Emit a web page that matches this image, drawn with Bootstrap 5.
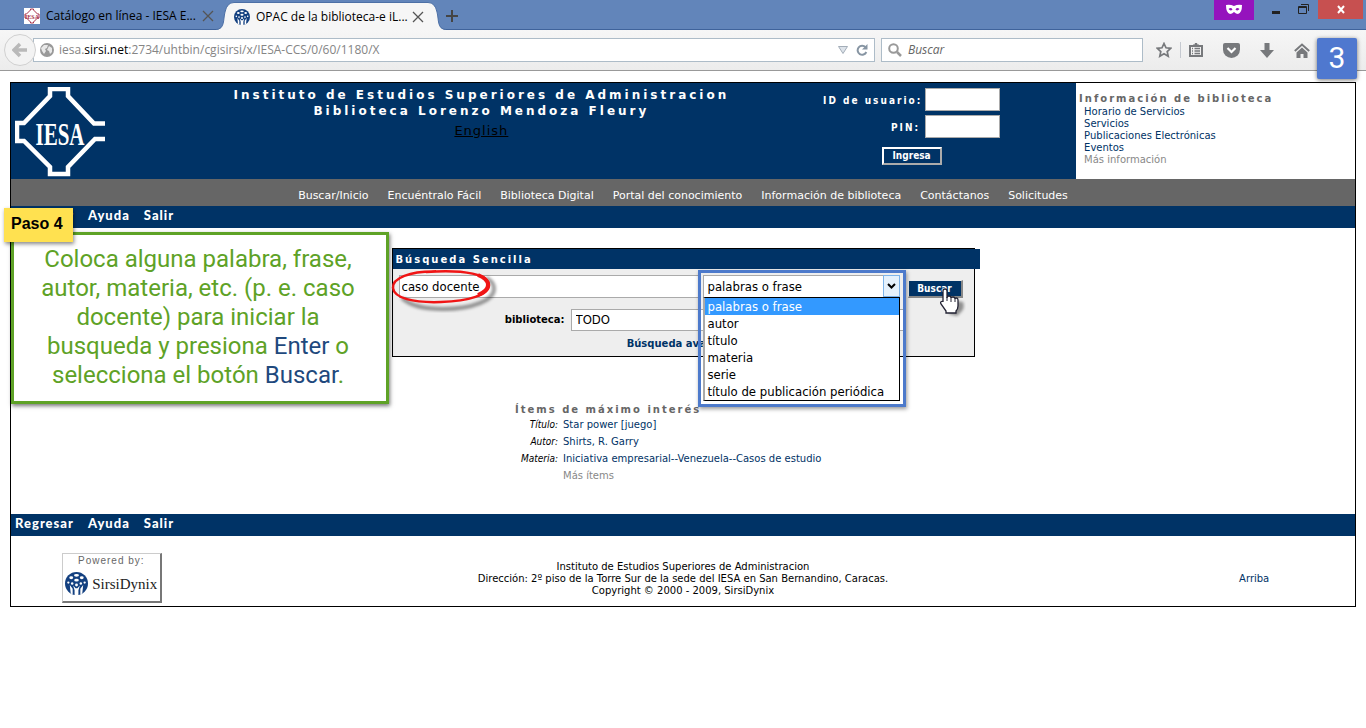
<!DOCTYPE html>
<html lang="es">
<head>
<meta charset="utf-8">
<meta name="viewport" content="width=device-width, initial-scale=1">
<title>OPAC de la biblioteca-e iLink</title>
<link href="https://cdn.jsdelivr.net/npm/bootstrap@5.3.0/dist/css/bootstrap.min.css" rel="stylesheet">
<style>
:root{--navy:#003366;--grey:#666;--verdana:"DejaVu Sans",Verdana,sans-serif;--tahoma:"DejaVu Sans Condensed","DejaVu Sans",sans-serif;--segoe:"Open Sans",sans-serif}
body{background:#fff;color:#000;font:10px/12px var(--verdana);overflow-x:hidden}
a{color:var(--navy);text-decoration:none}
svg{display:block;flex:none}
button{border:0;background:none;padding:0;color:inherit}
input,select{border-radius:0;outline:0}

/* browser frame */
.tabstrip{height:30px;background:#6285ba;border-bottom:1px solid #3f639b;font:12px/16px var(--segoe);padding-right:3px}
.tab-idle{width:216px;padding:2px 2px 0 24px}
.tab-live{height:30px;margin-bottom:-1px}
.tab-live .tab-fill{background:#f6f6f6;border-top:1px solid #4d70a6;height:28px;width:194px;margin-top:2px}
.tab-title{white-space:nowrap;margin-left:6px}
.winbtn{height:20px}
.mask{width:40px;background:#9513bd}
.closewin{width:45px;background:#c75050;height:19px;margin-left:8px}
.toolbar{height:41px;background:linear-gradient(#f6f6f6,#ececec);border-bottom:1px solid #999;font:12px/16px var(--segoe);padding:0 56px 0 4px}
.backbtn{width:32px;height:32px;border:1px solid #d0d0d0;border-radius:50%;background:#f3f3f3;z-index:1}
.field{height:24px;border:1px solid #adbcc8;background:#fff}
.field input{border:0;padding:0;background:none;color:#888;min-width:0;margin-left:6px}
.urlfield{margin-left:-3px;padding:0 6px;color:#858585}
.urltext{margin-left:5px}
.findfield{width:262px;padding-left:6px;margin-left:6px}
.findfield input{font-style:italic}
.findfield input::placeholder{color:#666;opacity:1}
.tools{margin-left:13px}
.tools .tool{margin-left:20px}
.vsep{width:1px;height:16px;background:#c5c9d0}
.stepno{right:9px;top:38px;width:40px;height:41px;background:#4f78cf;color:#fff;font:30px/40px Roboto,sans-serif;border-radius:2px;box-shadow:0 1px 4px #0008;z-index:5}

/* library page */
.page{margin:11px 10px 0;border:1px solid #000}
.masthead{display:grid;grid-template-columns:12% 46% 21.25% 1fr;background:var(--navy);color:#fff;min-height:96px}
.site-title{font:bold 12px/16px var(--verdana);letter-spacing:3px;margin:4px 0 0}
.english{font-size:13px;line-height:16px;letter-spacing:1px;color:#000;text-decoration:underline}
.login{display:grid;grid-template-columns:97px 75px;column-gap:5px;row-gap:4px;align-content:start;justify-content:end;padding:5px 76px 0 0}
.login label{font:bold 10px/25px var(--tahoma);height:23px;letter-spacing:2px;text-align:right;white-space:nowrap}
.login input{height:23px;border:1px solid #aaa;width:75px}
.login button{grid-column:1/3;justify-self:center;width:60px;height:18px;margin-top:5px;border:2px outset #fff;font:bold 10px/14px var(--tahoma)}
.facts{background:#fff;color:#000;padding:10px 3px 0}
.minihead{font:bold 10px/12px var(--verdana);letter-spacing:2px;color:var(--grey);margin:0}
.facts .minihead{margin-bottom:1px}
.facts a{display:block;margin-left:5px}
.faint{color:#888!important}
.mainnav{background:var(--grey);height:27px;font-size:11px;line-height:16px;padding-top:9px;gap:19px}
.mainnav a{color:#fff}
.menubar{background:var(--navy);height:22px;font:900 13px/19px Lato,sans-serif;letter-spacing:1px;padding-left:4px;gap:14px}
.menubar a{color:#fff}
.workarea{min-height:286px;padding-top:20px}
.finder{width:583px;border:1px solid #000;background:#eee;min-height:109px}
.finder h2{background:var(--navy);color:#fff;font:bold 10px/21px var(--verdana);height:20px;letter-spacing:2px;margin:0 -6px 0 0;padding-left:3px}
.finder input,.finder select{border:1px solid #aaa;background:#fff;color:#000;font:13px/16px var(--tahoma);padding:0 4px;appearance:none}
.query{margin:6px 0 0 6px}
.query .terms{height:23px;padding:0 2px}
.kind{width:197px;margin-left:4px}
.kind select{height:23px;width:197px}
.droparrow{right:0;top:0;width:17px;height:22px;background:#e5f1fc;border:1px solid #7eb4ea}
.kindframe{left:-5px;top:-5px;width:208px;height:137px;border:3px solid #4d7acb;box-shadow:1px 2px 4px #0006;z-index:3;pointer-events:none}
.kindlist{left:0;top:22px;width:197px;z-index:2;background:#fff;border:1px solid #000;border-left:2px solid #aaa;font:13px/17px var(--tahoma);padding:0;margin:0;list-style:none;white-space:nowrap}
.kindlist li{padding-left:3px}
.kindlist .picked{background:#3399ff;color:#fff}
.gobox{margin:5px 11px 0 8px}
.go{width:55px;height:18px;background:var(--navy);color:#fff;border:solid #ccc;border-color:#eee #888 #888 #eee;border-width:1px 2px 2px 1px;font:bold 10px/16px var(--tahoma)}
.libs{margin:11px 70px 0 0}
.libs label{font:bold 10px/16px var(--verdana);margin-right:6px}
.libs select{width:333px;height:22px}
.advanced{font:bold 10px/16px var(--verdana);margin-top:5px}
.interest{width:336px;margin:47px auto 0}
.interest td,.interest th{padding:0;line-height:17px;font-weight:normal}
.interest th{width:43px;font-style:italic;text-align:right;font-family:var(--tahoma)}
.interest td{padding-left:5px}
.baseline-row{display:grid;grid-template-columns:15% 70% 15%;min-height:70px}
.baseline-row .address{padding-top:25px}
.baseline-row .uplink{padding-top:37px}
.powered{width:100px;height:50px;margin-top:17px;border:1px solid #ccc;border-right:2px solid #777;border-bottom:2px solid #777;background:#fff}
.powered small{font:10px/14px "Liberation Sans",sans-serif;letter-spacing:1px;color:#666}
.powered b{font:15px/20px "Liberation Serif",serif;color:#222}

/* tutorial notes */
.note{left:11px;top:232px;width:378px;height:172px;border:3px solid #5ea226;background:#fff;color:#5ea226;font:24px/29px Roboto,sans-serif;padding:10px 20px 0 16px;box-shadow:1px 2px 4px #0008;z-index:3}
.note em{font-style:normal;color:#1f497d}
.sticker{left:4px;top:208px;width:69px;height:34px;padding-left:7px;background:#ffe150;font:bold 16px/32px "Liberation Sans",sans-serif;box-shadow:1px 2px 4px #0007;z-index:4}
.ring{left:-9px;top:-7px;z-index:2;pointer-events:none}
.hand{left:29px;top:2px;z-index:4;pointer-events:none}
</style>
</head>
<body class="position-relative">

<svg width="0" height="0" class="position-absolute" aria-hidden="true">
  <symbol id="globe" viewBox="0 0 24 24"><circle cx="12" cy="12" r="12" fill="#134080"/><g fill="#fff"><ellipse cx="12" cy="3.500" rx="2.600" ry="1.400"/><ellipse cx="6.500" cy="6" rx="2" ry="1.500"/><ellipse cx="17.500" cy="6" rx="2" ry="1.500"/><ellipse cx="12" cy="8.500" rx="2.400" ry="1.500"/><circle cx="3.500" cy="11" r="1.200"/><circle cx="20.500" cy="11" r="1.200"/><circle cx="7.500" cy="12" r="1.300"/><circle cx="16.500" cy="12" r="1.300"/><circle cx="12" cy="13.500" r="1.500"/><path d="M5 13.500l3 4v6l-2-1zM19 13.500l-3 4v6l2-1zM8.500 14l2.500 3h2l2.500-3-1.500 5v5h-4v-5z"/></g></symbol>
  <symbol id="cross" viewBox="0 0 12 12"><path d="M1 1l10 10M11 1L1 11" stroke="#555" stroke-width="1.300" fill="none"/></symbol>
</svg>

<header>
  <div class="tabstrip d-flex">
    <div class="tab-idle d-flex align-items-center">
      <svg width="16" height="16" viewBox="0 0 16 16"><path fill="#fff" d="M0 0h16v16H0z"/><path d="M6.500 1h3v1l4 4H15v4h-1.500l-4 4v1h-3v-1l-4-4H1V6h1.500l4-4z" fill="none" stroke="#a8324a"/><text x="8" y="10.500" font-family="Liberation Serif" font-weight="bold" font-size="6" text-anchor="middle" fill="#a8324a">IESA</text></svg>
      <span class="tab-title">Catálogo en línea - IESA E...</span>
      <button class="ms-auto" aria-label="Cerrar pestaña"><svg width="12" height="12"><use href="#cross"/></svg></button>
    </div>
    <div class="tab-live d-flex">
      <svg width="18" height="30" viewBox="0 0 18 30"><path d="M0 30C9 29 7 20 9 12Q11 2.500 18 2.500V30z" fill="#f6f6f6"/><path d="M0 29.500C9 29 7 20 9 12Q11 2.500 18 2.500" fill="none" stroke="#4d70a6"/></svg>
      <div class="tab-fill d-flex align-items-center">
        <svg width="16" height="16"><use href="#globe"/></svg>
        <span class="tab-title">OPAC de la biblioteca-e iL...</span>
        <button class="ms-auto me-1" aria-label="Cerrar pestaña"><svg width="12" height="12"><use href="#cross"/></svg></button>
      </div>
      <svg width="18" height="30" viewBox="0 0 18 30"><path d="M18 30C9 29 11 20 9 12Q7 2.500 0 2.500V30z" fill="#f6f6f6"/><path d="M18 29.500C9 29 11 20 9 12Q7 2.500 0 2.500" fill="none" stroke="#4d70a6"/></svg>
    </div>
    <button class="mb-auto mt-2" aria-label="Nueva pestaña"><svg width="12" height="16" viewBox="0 0 12 16"><path d="M6 2v12M0 8h12" stroke="#454545" stroke-width="2"/></svg></button>
    <div class="ms-auto d-flex">
      <span class="winbtn mask d-flex justify-content-center"><svg width="16" height="20" viewBox="0 0 16 20"><path fill="#fff" fill-rule="evenodd" d="M0 5q4-1 8 1q4-2 8-1q0 8-4 9-2 0-4-2-2 2-4 2-4-1-4-9zM2.500 9q2.500-2 4 0.500-2 2-4-.5zM13.500 9q-2.500-2-4 .5 2 2 4-.5z"/></svg></span>
      <button class="winbtn ms-3" aria-label="Minimizar"><svg width="12" height="20"><path d="M2 12.500h8" stroke="#222" stroke-width="3"/></svg></button>
      <button class="winbtn ms-3" aria-label="Restaurar"><svg width="12" height="20" viewBox="0 0 12 20"><path d="M3 4.500h7.500V11M.5 6.500h8v7h-8zM.5 7.500h8" stroke="#222" fill="none"/></svg></button>
      <button class="winbtn closewin d-flex justify-content-center" aria-label="Cerrar"><svg width="8" height="19" viewBox="0 0 8 19"><path d="M1 6l6 7M7 6l-6 7" stroke="#fff" stroke-width="2"/></svg></button>
    </div>
  </div>
  <div class="toolbar d-flex align-items-center">
    <button class="backbtn d-flex align-items-center justify-content-center" aria-label="Atrás"><svg width="16" height="16" viewBox="0 0 16 16"><path d="M8 2L2 8l6 6M3 8h12" fill="none" stroke="#b9b9b9" stroke-width="3.500"/></svg></button>
    <div class="field urlfield d-flex align-items-center flex-grow-1">
      <svg width="14" height="14" viewBox="0 0 14 14"><circle cx="7" cy="7" r="7" fill="#999"/><path d="M1 5l3-3 4 0-1 3-2 1 1 2-2 3-2-3zM9 3l3 2v4l-2 2-1-3-2-1z" fill="#e8e8e8"/></svg>
      <span class="urltext">iesa.<span class="text-black">sirsi.net</span>:2734/uhtbin/cgisirsi/x/IESA-CCS/0/60/1180/X</span>
      <svg class="ms-auto me-2" width="10" height="8"><path d="M.5.5h9L5 7.500z" fill="#dde3ea" stroke="#a3adb8"/></svg>
      <button aria-label="Recargar"><svg width="12" height="12" viewBox="0 0 12 12"><path d="M9.500 3.200A4.500 4.500 0 1 0 10.300 8" fill="none" stroke="#8795a3" stroke-width="2"/><path d="M11.500 0v5.500H6z" fill="#8795a3"/></svg></button>
    </div>
    <label class="field findfield d-flex align-items-center">
      <svg width="14" height="14" viewBox="0 0 14 14"><circle cx="5.500" cy="5.500" r="4.300" fill="none" stroke="#999" stroke-width="2"/><path d="M9 9l4 4" stroke="#999" stroke-width="2.500"/></svg>
      <input class="flex-grow-1" type="text" placeholder="Buscar" aria-label="Buscar en la web">
    </label>
    <div class="tools d-flex align-items-center">
      <button aria-label="Marcador"><svg width="16" height="16" viewBox="0 0 16 16"><path d="M8 1.500l2 4.300 4.700.5-3.500 3.200 1 4.700L8 11.800l-4.200 2.400 1-4.700L1.300 6.300 6 5.800z" fill="none" stroke="#77797c" stroke-width="1.700"/></svg></button>
      <span class="vsep mx-2"></span>
      <button aria-label="Lista de marcadores"><svg width="14" height="16" viewBox="0 0 14 16"><path d="M1 4h12v10H1z" fill="none" stroke="#77797c" stroke-width="2"/><path d="M4 4V2.500h1.500L6 1h2l.5 1.500H10V4z" fill="#77797c"/><path d="M3 6.500h1M5.500 6.500H11M3 9h1M5.500 9H11M3 11.500h1M5.500 11.500H11" stroke="#77797c" stroke-width="1.300"/></svg></button>
      <button class="tool" aria-label="Pocket"><svg width="17" height="15" viewBox="0 0 17 15"><path d="M2 0h13q2 0 2 2v4.500a8.500 8.500 0 0 1-17 0V2q0-2 2-2z" fill="#77797c"/><path d="M4.500 5l4 4 4-4" fill="none" stroke="#fff" stroke-width="2.200"/></svg></button>
      <button class="tool" aria-label="Descargas"><svg width="14" height="15" viewBox="0 0 14 15"><path d="M4.500 0h5v7H14l-7 8-7-8h4.500z" fill="#77797c"/></svg></button>
      <button class="tool" aria-label="Inicio"><svg width="16" height="15" viewBox="0 0 16 15"><path d="M.8 8L8 1.500 15.200 8" fill="none" stroke="#77797c" stroke-width="2"/><path d="M8 4.500l5.500 5V15h-4v-4h-3v4h-4V9.500z" fill="#77797c"/></svg></button>
    </div>
  </div>
  <div class="stepno position-absolute text-center">3</div>
</header>

<main class="page">
  <div class="masthead">
    <svg class="mt-1 ms-1" width="90" height="90" viewBox="1 1 90 90"><path d="M91 37.500H80L54 10V3H36v7L10 37H3v18h7l26 26v7h18v-7L81 53h10" fill="none" stroke="#fff" stroke-width="4.500"/><text x="46" y="59" font-family="Liberation Serif" font-weight="bold" font-size="21" text-anchor="middle" fill="#fff" transform="translate(0 -32) scale(1 1.550)">IESA</text></svg>
    <div class="text-center">
      <h1 class="site-title">Instituto de Estudios Superiores de Administracion<br>Biblioteca Lorenzo Mendoza Fleury</h1>
      <a class="english d-inline-block mt-1" href="#">English</a>
    </div>
    <form class="login">
      <label for="uid">ID de usuario:</label><input id="uid" type="text">
      <label for="pin">PIN:</label><input id="pin" type="password">
      <button type="button">Ingresa</button>
    </form>
    <aside class="facts">
      <h2 class="minihead">Información de biblioteca</h2>
      <a href="#">Horario de Servicios</a>
      <a href="#">Servicios</a>
      <a href="#">Publicaciones Electrónicas</a>
      <a href="#">Eventos</a>
      <a href="#" class="faint">Más información</a>
    </aside>
  </div>
  <nav class="mainnav d-flex justify-content-center">
    <a href="#">Buscar/Inicio</a><a href="#">Encuéntralo Fácil</a><a href="#">Biblioteca Digital</a><a href="#">Portal del conocimiento</a><a href="#">Información de biblioteca</a><a href="#">Contáctanos</a><a href="#">Solicitudes</a>
  </nav>
  <nav class="menubar d-flex"><a href="#">Regresar</a><a href="#">Ayuda</a><a href="#">Salir</a></nav>

  <section class="workarea">
    <form class="finder mx-auto">
      <h2>Búsqueda Sencilla</h2>
      <div class="query d-flex">
        <div class="position-relative flex-grow-1 d-flex">
          <input class="terms flex-grow-1" type="text" value="caso docente" aria-label="Términos de búsqueda">
          <svg class="ring position-absolute" width="112" height="46" viewBox="0 0 112 46"><defs><filter id="soft"><feGaussianBlur stdDeviation="1.500"/></filter></defs><g fill="none"><path d="M12 30q12 11 41 11c30 0 51-9 51-20 0-5-3-9-8-11" stroke="#0006" stroke-width="4" filter="url(#soft)"/><path d="M46 3.500C20 3 2 10 3 20s20 15 48 14 48-7 48-17S76 1 36 4" stroke="#f01515" stroke-width="2.500"/><path d="M88 7q10 4 10 10t-10 10" stroke="#f01515" stroke-width="4"/></g></svg>
        </div>
        <div class="kind position-relative">
          <select aria-label="Campo"><option>palabras o frase</option><option>autor</option><option>título</option><option>materia</option><option>serie</option><option>título de publicación periódica</option></select>
          <svg class="droparrow position-absolute" viewBox="0 0 15 20"><path d="M4 8l3.500 3.500L11 8" fill="none" stroke="#000" stroke-width="2"/></svg>
          <ul class="kindlist position-absolute"><li class="picked">palabras o frase</li><li>autor</li><li>título</li><li>materia</li><li>serie</li><li>título de publicación periódica</li></ul>
          <div class="kindframe position-absolute"></div>
        </div>
        <div class="gobox position-relative">
          <button class="go d-block" type="button">Buscar</button>
          <svg class="hand position-absolute" width="34" height="40" viewBox="0 0 34 40"><path d="M13 18l13 2q2 5-1 9l-5 5-8-2z" fill="#0006" filter="url(#soft)"/><path d="M6 9Q6 7 8 7t2 2v7q0-2 2-2t2 2q0-1 2-1t2 2q0-1 1.500-1T21 18v6q0 3-2 5v2H9v-2l-5-7q-1-2 .5-2.500T6 20z" fill="#fff" stroke="#223" stroke-width="1.300"/><path d="M10 15v4M14 16v4M18 17v3" stroke="#223"/></svg>
        </div>
      </div>
      <div class="libs d-flex justify-content-end align-items-center">
        <label for="lib">biblioteca:</label>
        <select id="lib"><option>TODO</option></select>
      </div>
      <div class="advanced text-center"><a href="#">Búsqueda avanzada</a></div>
    </form>

    <div class="interest">
      <h2 class="minihead">Ítems de máximo interés</h2>
      <table>
        <tr><th scope="row">Título:</th><td><a href="#">Star power [juego]</a></td></tr>
        <tr><th scope="row">Autor:</th><td><a href="#">Shirts, R. Garry</a></td></tr>
        <tr><th scope="row">Materia:</th><td><a href="#">Iniciativa empresarial--Venezuela--Casos de estudio</a></td></tr>
        <tr><td></td><td><a href="#" class="faint">Más ítems</a></td></tr>
      </table>
    </div>
  </section>

  <nav class="menubar d-flex"><a href="#">Regresar</a><a href="#">Ayuda</a><a href="#">Salir</a></nav>
  <footer class="baseline-row">
    <div class="powered mx-auto text-center">
      <small class="d-block">Powered by:</small>
      <div class="d-flex align-items-center justify-content-center mt-1"><svg width="23" height="23"><use href="#globe"/></svg><b class="ms-1">SirsiDynix</b></div>
    </div>
    <p class="address text-center m-0">Instituto de Estudios Superiores de Administracion<br>Dirección: 2º piso de la Torre Sur de la sede del IESA en San Bernandino, Caracas.<br>Copyright © 2000 - 2009, SirsiDynix</p>
    <a class="uplink text-center" href="#">Arriba</a>
  </footer>
</main>

<div class="note position-absolute text-center">Coloca alguna palabra, frase, autor, materia, etc. (p. e. caso docente) para iniciar la busqueda y presiona <em>Enter</em> o selecciona el botón <em>Buscar</em>.</div>
<div class="sticker position-absolute">Paso 4</div>

<script src="https://cdn.jsdelivr.net/npm/bootstrap@5.3.0/dist/js/bootstrap.bundle.min.js"></script>
</body>
</html>
